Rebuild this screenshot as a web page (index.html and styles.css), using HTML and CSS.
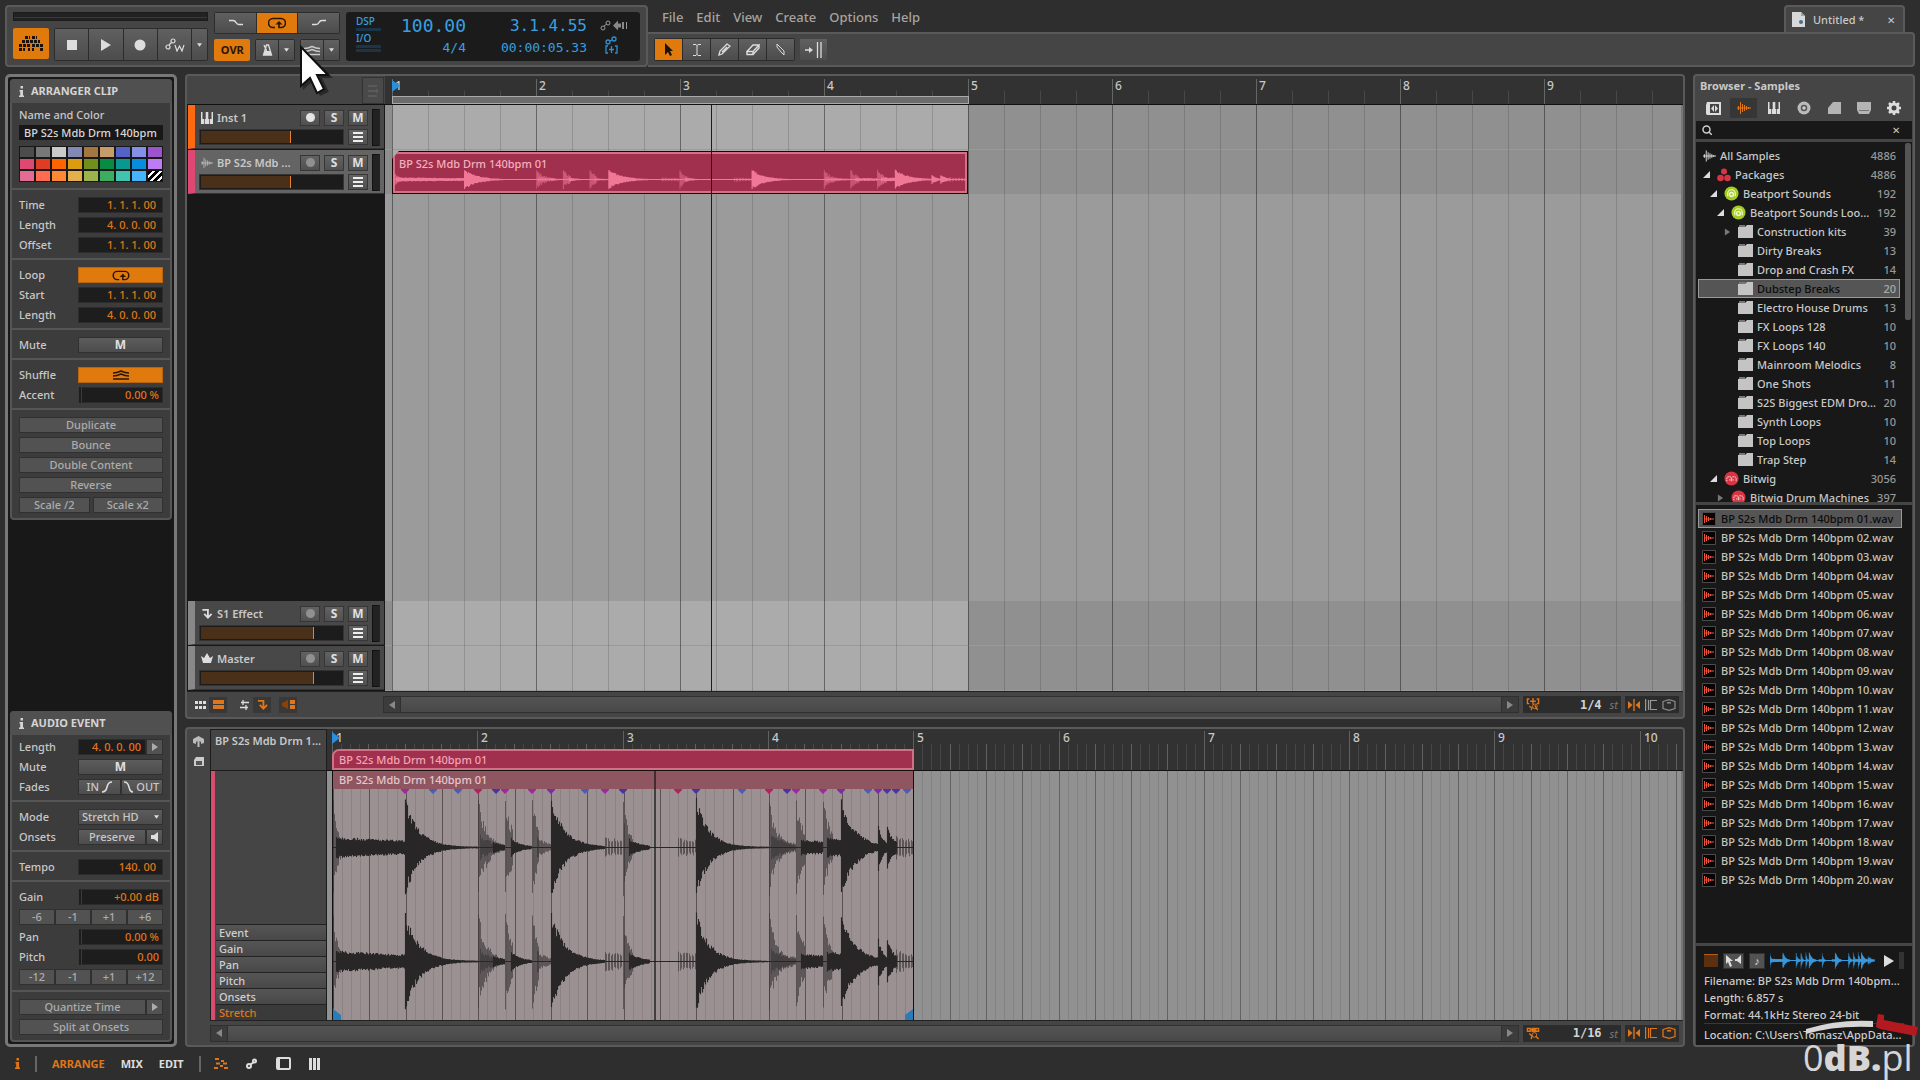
FILE: index.html
```html
<!DOCTYPE html>
<html lang="en">
<head>
<meta charset="utf-8">
<title>Untitled * - Arranger</title>
<link rel="stylesheet" href="styles.css">
</head>
<body>
<svg class="defs" aria-hidden="true">
  <symbol id="i-folder" viewBox="0 0 15 13"><path fill="#777" d="M1 0h6v3H1z"/><path fill="#c4c4c4" d="M0 2h7l2-2h6v13H0z"/></symbol>
  <symbol id="i-open" viewBox="0 0 8 8"><path fill="#ddd" d="M8 0v8H0z"/></symbol>
  <symbol id="i-closed" viewBox="0 0 8 8"><path fill="#777" d="M1 0l6 4-6 4z"/></symbol>
  <symbol id="i-wave" viewBox="0 0 14 12"><path stroke="currentColor" d="M0 6h14M1.500 4v4M3.500 0v12M5.500 2v8M7.500 3v6M9.500 4v4M11.500 5v2"/></symbol>
  <symbol id="i-file" viewBox="0 0 14 14"><path fill="#080404" stroke="#4a4a4a" d="M.5.5h13v13H.5z"/><path stroke="#e8543c" d="M2 7h10M2.500 3v8M4.500 4v6M6.500 5v4M8.500 6v2"/></symbol>
  <symbol id="i-keys" viewBox="0 0 12 12"><path fill="#ddd" d="M0 0h1.500v7H3V12H0zM3.700 7h1V0h2.600v7h1v5H3.700zM10.500 0H12v12H9V7h1.500z"/></symbol>
  <symbol id="i-lines" viewBox="0 0 12 10"><path fill="#eee" d="M1 0h10v2H1zM1 4h10v2H1zM1 8h10v2H1z"/></symbol>
  <symbol id="i-loop" viewBox="0 0 18 12"><path fill="none" stroke="currentColor" stroke-width="1.600" d="M7 10.500H5a4.500 4.500 0 0 1 0-9h8a4.500 4.500 0 0 1 0 9h-2V5"/><path fill="currentColor" d="M7.500 7.500L11 4l3.500 3.500z"/></symbol>
  <symbol id="i-shuffle" viewBox="0 0 16 10"><path fill="none" stroke="currentColor" stroke-width="1.500" d="M0 9h16M0 6q4 0 8-2 4 2 8 2M0 3q4 0 8-2 4 2 8 2"/></symbol>
  <symbol id="i-down" viewBox="0 0 6 4"><path fill="#ddd" d="M0 0h6L3 4z"/></symbol>
  <symbol id="i-right" viewBox="0 0 6 8"><path fill="currentColor" d="M0 0l6 4-6 4z"/></symbol>
  <symbol id="i-left" viewBox="0 0 6 8"><path fill="currentColor" d="M6 0L0 4l6 4z"/></symbol>
  <symbol id="i-bp" viewBox="0 0 16 16"><circle cx="8" cy="8" r="7.500" fill="#a4cc1c"/><path fill="none" stroke="#f0f8d0" stroke-width="1.300" d="M4 11V8a4 4 0 0 1 8 0v3"/><circle cx="8" cy="9" r="2" fill="none" stroke="#f0f8d0" stroke-width="1.500"/></symbol>
  <symbol id="i-bw" viewBox="0 0 16 16"><circle cx="8" cy="8" r="7.500" fill="#d83444"/><path fill="none" stroke="#f4b8bc" stroke-width="1.300" stroke-dasharray="1.500 .6" d="M3 11V8.500a2.500 2.500 0 0 1 5 0V11m0-2.500a2.500 2.500 0 0 1 5 0V11M5.500 9.500h5"/></symbol>
  <symbol id="i-info" viewBox="0 0 5 11"><path fill="currentColor" d="M1.500 0h2.500v2.500H1.500zM.5 4H4v5.500h1V11H0V9.500h1.200v-4H.5z"/></symbol>
  <symbol id="i-snap" viewBox="0 0 14 14"><path fill="none" stroke="currentColor" stroke-width="1.500" d="M3 1H1v5h2M11 1h2v5h-2M7 0v7M4 3.500h6M3 9l3 1.500L5 13M9 8l3 5"/><circle cx="9" cy="9" r="2.500" fill="none" stroke="currentColor"/></symbol>
  <symbol id="i-snap2" viewBox="0 0 14 14"><path fill="none" stroke="currentColor" stroke-width="1.500" d="M1 1.500h3v3H1zM6 1.500h3v3H6zM10 1.500h3v3h-3zM4 3h6M3 7l3 3-1 3M10 10l3 3"/><circle cx="8.500" cy="8.500" r="2.500" fill="none" stroke="currentColor"/></symbol>
  <symbol id="i-mid" viewBox="0 0 12 12"><path fill="currentColor" d="M5.300 0h1.400v12H5.300zM0 2l4.500 4L0 10zM12 2L7.500 6l4.500 4z"/></symbol>
  <symbol id="i-grid" viewBox="0 0 12 12"><path fill="none" stroke="currentColor" stroke-width="1.200" d="M.6 0v12M3.500 1v10M12 1.500H5.500v9H12"/></symbol>
  <symbol id="i-hex" viewBox="0 0 14 12"><path fill="none" stroke="currentColor" stroke-width="1.300" d="M1 2.500L7 .7l6 1.800v7l-6 1.800-6-1.800zM5 4l2-.5 2 .5"/></symbol>
  <symbol id="i-send" viewBox="0 0 12 12"><path fill="none" stroke="currentColor" stroke-width="2" d="M1 2h6v7M3 6.500l4 4 4-4"/></symbol>
</svg>

<header class="top">
  <section class="transport panel">
    <div class="left-controls">
      <div class="meter"></div>
      <div class="btns">
        <button class="btn on logo" aria-label="Application menu"><svg width="26" height="15"><path fill="#1c1208" d="M7 0h3v3H7zm4 0h1v3h-1zM14 0h3v3h-3zm4 0h1v3h-1zM4 4h3v3H4zm4 0h3v3H8zm4 0h3v3h-3zm4 0h3v3h-3zm4 0h2v3h-2zM1 8h3v3H1zm4 0h3v3H5zm4 0h3v3H9zm5 0h3v3h-3zm4 0h3v3h-3zm4 0h3v3h-3zM1 12h3v3H1zm4 0h2v3H5zm17 0h3v3h-3zM10 12h2v3h-2zm4 0h2v3h-2z"/></svg></button>
        <div class="group">
          <button class="btn wide" aria-label="Stop"><svg width="10" height="10"><path fill="#ddd" d="M0 0h10v10H0z"/></svg></button>
          <button class="btn wide" aria-label="Play"><svg width="10" height="12"><path fill="#ddd" d="M0 0l10 6-10 6z"/></svg></button>
          <button class="btn wide" aria-label="Record"><svg width="12" height="12"><circle cx="6" cy="6" r="5.500" fill="#ddd"/></svg></button>
          <button class="btn wide" aria-label="Automation write"><svg width="20" height="14"><g fill="none" stroke="#ddd" stroke-width="1.200"><circle cx="3" cy="9" r="2"/><circle cx="8" cy="3" r="2"/><path d="M4 7l3-3M10 7l2 6 2.500-5 2.500 5 2-6"/></g></svg></button>
          <button class="btn slim" aria-label="Automation options"><svg width="5" height="4"><use href="#i-down"/></svg></button>
        </div>
      </div>
    </div>
    <div class="mid-controls">
      <div class="group">
        <button class="btn third" aria-label="Punch in"><svg width="16" height="8"><path fill="none" stroke="#ddd" stroke-width="1.500" d="M1 1.500h4q2 0 3 2t3 2h4"/></svg></button>
        <button class="btn third on" aria-label="Loop"><svg width="18" height="12"><use href="#i-loop"/></svg></button>
        <button class="btn third" aria-label="Punch out"><svg width="16" height="8"><path fill="none" stroke="#ddd" stroke-width="1.500" d="M1 5.500h4q2 0 3-2t3-2h4"/></svg></button>
      </div>
      <div class="btns lower">
        <button class="btn on ovr">OVR</button>
        <div class="group">
          <button class="btn metro" aria-label="Metronome"><svg width="11" height="12"><path fill="none" stroke="#ddd" stroke-width="1.300" d="M4.500 1h2l3 10h-8zM6 10L2 1"/><path fill="#ddd" d="M2.500 7h6l1 4h-8z"/></svg></button>
          <button class="btn slim" aria-label="Metronome options"><svg width="5" height="4"><use href="#i-down"/></svg></button>
        </div>
        <div class="group">
          <button class="btn metro" aria-label="Groove"><svg width="16" height="11"><use href="#i-shuffle"/></svg></button>
          <button class="btn slim" aria-label="Groove options"><svg width="5" height="4"><use href="#i-down"/></svg></button>
        </div>
      </div>
    </div>
    <div class="display">
      <div class="load"><span>DSP</span><i></i><span>I/O</span><i></i><i></i></div>
      <div class="tempo"><b>100.00</b><span>4/4</span></div>
      <div class="position"><b>3.1.4.55</b><span>00:00:05.33</span></div>
      <svg width="32" height="46" fill="none"><g stroke="#999"><circle cx="3" cy="13" r="2"/><circle cx="8" cy="8" r="2"/><path d="M4 11l3-2M26.500 7v7"/></g><path fill="#888" d="M13 10.500l5-5v3h3v4h-3v3zM22 7h2v7h-2z"/><g stroke="#2f90d0" stroke-width="1.300"><circle cx="8" cy="27" r="2"/><circle cx="14" cy="24" r="2"/><path d="M10 26l2-1M8 31H6v7h2M15 31h2v7h-2M9 34.500h5M11.500 31v7"/></g></svg>
    </div>
  </section>
  <div class="top-right">
    <div class="menu-row">
      <nav><a href="#">File</a><a href="#">Edit</a><a href="#">View</a><a href="#">Create</a><a href="#">Options</a><a href="#">Help</a></nav>
      <div class="tab"><svg width="14" height="15"><path fill="#d8d8d8" d="M0 0h9l4 4v11H0z"/><path fill="#8aa" d="M9 0v4h4z"/><circle cx="9" cy="10" r="2" fill="#456f90"/></svg><span>Untitled *</span><button aria-label="Close tab">✕</button></div>
    </div>
    <div class="toolbar">
      <div class="group">
        <button class="btn tool on" aria-label="Pointer"><svg width="10" height="14"><path fill="#1c1208" d="M1 0l8 8H6l2 4-2 1-2-4-3 3z"/></svg></button>
        <button class="btn tool" aria-label="Time select"><svg width="10" height="14"><path fill="none" stroke="#ddd" d="M1 1.500h3l1 1 1-1h3M5 2v10M1 12.500h3l1-1 1 1h3"/></svg></button>
        <button class="btn tool" aria-label="Pen"><svg width="13" height="13"><path fill="none" stroke="#ddd" stroke-width="1.300" d="M1 12l1-4 7-7 3 2-8 8zM4 9l5-5"/></svg></button>
        <button class="btn tool" aria-label="Eraser"><svg width="14" height="12"><path fill="none" stroke="#ddd" stroke-width="1.400" d="M1 7.500L7 1h6L7 7.500zv3h6v-3M7 10.500L13 4V1"/></svg></button>
        <button class="btn tool" aria-label="Knife"><svg width="11" height="13"><path fill="#555" stroke="#ddd" d="M2 1l7 7v4L6 9 2 4z"/></svg></button>
      </div>
      <button class="btn tool" aria-label="Follow playhead"><svg width="17" height="16"><path stroke="#ddd" stroke-width="1.300" d="M0 8h6M12.500 0v16M16 0v16"/><path fill="#ddd" d="M4 5l4 3-4 3z"/></svg></button>
    </div>
  </div>
</header>

<main>
  <aside class="inspector">
    <section class="card">
      <h2><svg width="5" height="11"><use href="#i-info"/></svg>ARRANGER CLIP</h2>
      <div class="sec first">
        <label class="row" for="clip-name">Name and Color</label>
        <input id="clip-name" class="name" value="BP S2s Mdb Drm 140bpm">
        <div class="palette">
          <button class="c1"></button><button class="c2"></button><button class="c3"></button><button class="c4"></button><button class="c5"></button><button class="c6"></button><button class="c7"></button><button class="c8"></button><button class="c9"></button>
          <button class="c10"></button><button class="c11"></button><button class="c12"></button><button class="c13"></button><button class="c14"></button><button class="c15"></button><button class="c16"></button><button class="c17"></button><button class="c18"></button>
          <button class="c19"></button><button class="c20"></button><button class="c21"></button><button class="c22"></button><button class="c23"></button><button class="c24"></button><button class="c25"></button><button class="c26"></button><button class="c27"></button>
        </div>
      </div>
      <div class="sec">
        <div class="row"><label for="f1">Time</label><input id="f1" value="1. 1. 1. 00"></div>
        <div class="row"><label for="f2">Length</label><input id="f2" value="4. 0. 0. 00"></div>
        <div class="row"><label for="f3">Offset</label><input id="f3" value="1. 1. 1. 00"></div>
      </div>
      <div class="sec">
        <div class="row"><span>Loop</span><button class="flat on" aria-label="Loop"><svg width="18" height="11"><use href="#i-loop"/></svg></button></div>
        <div class="row"><label for="f4">Start</label><input id="f4" value="1. 1. 1. 00"></div>
        <div class="row"><label for="f5">Length</label><input id="f5" value="4. 0. 0. 00"></div>
      </div>
      <div class="sec">
        <div class="row"><span>Mute</span><button class="flat strong">M</button></div>
      </div>
      <div class="sec">
        <div class="row"><span>Shuffle</span><button class="flat on" aria-label="Shuffle"><svg width="16" height="10"><use href="#i-shuffle"/></svg></button></div>
        <div class="row"><label for="f6">Accent</label><input id="f6" class="knob" value="0.00 %"></div>
      </div>
      <div class="sec">
        <div class="row"><button class="act">Duplicate</button></div>
        <div class="row"><button class="act">Bounce</button></div>
        <div class="row"><button class="act">Double Content</button></div>
        <div class="row"><button class="act">Reverse</button></div>
        <div class="row pair"><button class="act">Scale /2</button><button class="act">Scale x2</button></div>
      </div>
    </section>
    <section class="card">
      <h2><svg width="5" height="11"><use href="#i-info"/></svg>AUDIO EVENT</h2>
      <div class="sec first">
        <div class="row"><label for="g1">Length</label><span class="combo"><input id="g1" value="4. 0. 0. 00"><button class="act mini" aria-label="More"><svg width="6" height="8"><use href="#i-right"/></svg></button></span></div>
        <div class="row"><span>Mute</span><button class="flat strong">M</button></div>
        <div class="row"><span>Fades</span><span class="combo"><button class="flat">IN <svg width="10" height="12"><path fill="none" stroke="#ddd" stroke-width="1.500" d="M0 11q4 0 5-5t5-5"/></svg></button><button class="flat"><svg width="9" height="12"><path fill="none" stroke="#ddd" stroke-width="1.500" d="M0 1q4 0 5 5t4 5"/></svg>OUT</button></span></div>
      </div>
      <div class="sec">
        <div class="row"><label for="mode">Mode</label><span class="pick"><select id="mode"><option>Stretch HD</option></select><svg width="5" height="4"><use href="#i-down"/></svg></span></div>
        <div class="row"><span>Onsets</span><span class="combo"><button class="flat">Preserve</button><button class="flat mini" aria-label="Audition"><svg width="8" height="10"><path fill="#ddd" d="M0 3h3l4-3v10L3 7H0z"/></svg></button></span></div>
      </div>
      <div class="sec">
        <div class="row"><label for="g2">Tempo</label><input id="g2" value="140. 00"></div>
      </div>
      <div class="sec">
        <div class="row"><label for="g3">Gain</label><input id="g3" class="knob" value="+0.00 dB"></div>
        <div class="row quad"><button class="act">-6</button><button class="act">-1</button><button class="act">+1</button><button class="act">+6</button></div>
        <div class="row"><label for="g4">Pan</label><input id="g4" class="knob" value="0.00 %"></div>
        <div class="row"><label for="g5">Pitch</label><input id="g5" class="knob" value="0.00"></div>
        <div class="row quad"><button class="act">-12</button><button class="act">-1</button><button class="act">+1</button><button class="act">+12</button></div>
      </div>
      <div class="sec">
        <div class="row quad"><button class="act">Quantize Time</button><button class="act mini" aria-label="Quantize options"><svg width="6" height="8"><use href="#i-right"/></svg></button></div>
        <div class="row"><button class="act">Split at Onsets</button></div>
      </div>
    </section>
  </aside>

  <div class="workspace">
    <section class="panel arranger">
      <div class="ruler-row">
        <div class="head-space"><button class="btn view" aria-label="View"><svg width="12" height="14"><path fill="#5a5a5a" d="M1 1h9v2H1zM1 6h9v2H1zM1 11h9v2H1zM9 4l3 3-3 3z"/></svg></button></div>
        <div class="ruler"><svg id="arr-ruler"></svg></div>
      </div>
      <div class="arr-body">
        <div class="tracks">
          <div class="track inst"><div class="t-main">
            <div class="t-row"><svg width="12" height="12"><use href="#i-keys"/></svg><span class="t-name">Inst 1</span><button class="sq" aria-label="Arm"><i class="dot lit"></i></button><button class="sq">S</button><button class="sq">M</button></div>
            <div class="t-row"><div class="vol"><i class="v60"></i></div><button class="sq" aria-label="Menu"><svg width="12" height="10"><use href="#i-lines"/></svg></button></div></div><div class="vu"></div></div>
          <div class="track audio sel"><div class="t-main">
            <div class="t-row"><svg width="12" height="12" color="#bbb"><use href="#i-wave"/></svg><span class="t-name">BP S2s Mdb ...</span><button class="sq" aria-label="Arm"><i class="dot"></i></button><button class="sq">S</button><button class="sq">M</button></div>
            <div class="t-row"><div class="vol"><i class="v60"></i></div><button class="sq" aria-label="Menu"><svg width="12" height="10"><use href="#i-lines"/></svg></button></div></div><div class="vu"></div></div>
          <div class="fill"></div>
          <div class="track fx"><div class="t-main">
            <div class="t-row"><svg width="12" height="11" color="#ddd"><use href="#i-send"/></svg><span class="t-name">S1 Effect</span><button class="sq" aria-label="Arm"><i class="dot"></i></button><button class="sq">S</button><button class="sq">M</button></div>
            <div class="t-row"><div class="vol"><i class="v77"></i></div><button class="sq" aria-label="Menu"><svg width="12" height="10"><use href="#i-lines"/></svg></button></div></div><div class="vu"></div></div>
          <div class="track fx"><div class="t-main">
            <div class="t-row"><svg width="12" height="11"><path fill="#ddd" d="M0 3l3 2 3-5 3 5 3-2-2 7H2z"/></svg><span class="t-name">Master</span><button class="sq" aria-label="Arm"><i class="dot"></i></button><button class="sq">S</button><button class="sq">M</button></div>
            <div class="t-row"><div class="vol"><i class="v77"></i></div><button class="sq" aria-label="Menu"><svg width="12" height="10"><use href="#i-lines"/></svg></button></div></div><div class="vu"></div></div>
        </div>
        <div class="lanes">
          <svg id="arr-grid" class="over"></svg>
          <div class="lane"></div>
          <div class="lane"><div class="clip"><span>BP S2s Mdb Drm 140bpm 01</span><svg id="clip-wave" class="over"></svg></div></div>
          <div class="fill"></div>
          <div class="lane"></div>
          <div class="lane"></div>
          <div class="playhead arr-play"></div>
        </div>
      </div>
      <div class="strip">
        <div class="toggles">
          <button aria-label="Clip launcher"><svg width="11" height="8"><path fill="#ddd" d="M0 0h3v3H0zM4 0h3v3H4zM8 0h3v3H8zM0 5h3v3H0zM4 5h3v3H4zM8 5h3v3H8z"/></svg></button>
          <button class="active" aria-label="Timeline"><svg width="11" height="9"><path fill="#e0761a" d="M0 0h11v4H0zM0 5h11v4H0z"/></svg></button>
          <button class="gap" aria-label="IO"><svg width="9" height="10"><path stroke="#ddd" stroke-width="1.300" d="M1 2.500h8M0 7.500h8M3 0v5M6 5v5"/></svg></button>
          <button class="active" aria-label="Effect tracks"><svg width="11" height="11" color="#e0761a"><use href="#i-send"/></svg></button>
          <button class="active gap" aria-label="Crossfade"><svg width="13" height="9"><path fill="#8a4208" d="M6 0v9L0 6V3z"/><path fill="#e0761a" d="M8 0h5v4H8zM8 5h5v4H8z"/></svg></button>
        </div>
        <div class="scroll"><button aria-label="Scroll left"><svg width="6" height="8"><use href="#i-left"/></svg></button><div class="thumb"></div><button aria-label="Scroll right"><svg width="6" height="8"><use href="#i-right"/></svg></button></div>
        <div class="snap"><svg width="14" height="13" color="#e0761a"><use href="#i-snap"/></svg><b>1/4</b><i>st</i></div>
        <div class="modes"><svg width="12" height="12" color="#e0761a"><use href="#i-mid"/></svg><svg width="12" height="12" color="#999"><use href="#i-grid"/></svg><svg width="14" height="12" color="#888"><use href="#i-hex"/></svg></div>
      </div>
    </section>

    <section class="panel editor">
      <div class="ed-icons"><svg width="11" height="11"><path fill="#bbb" d="M0 3l5.500-3L11 3v4l-3 1V6L6.500 5v6h-2V5L3 6v2L0 7z"/></svg><svg width="11" height="11"><path fill="#ccc" d="M3 1h8v9H1V4z"/><path fill="#555" d="M3 5h6v4H3z"/></svg></div>
      <div class="ed-main">
        <div class="ed-grid">
          <div class="ed-name">BP S2s Mdb Drm 1...</div>
          <div class="ed-ruler"><svg id="ed-ruler" class="over"></svg><div class="ed-clip">BP S2s Mdb Drm 140bpm 01</div></div>
          <div class="ed-side"><button>Event</button><button>Gain</button><button>Pan</button><button>Pitch</button><button>Onsets</button><button class="cur">Stretch</button></div>
          <div class="ed-canvas">
            <svg id="ed-back" class="over"></svg>
            <div class="event"><div class="event-head">BP S2s Mdb Drm 140bpm 01</div><svg id="ed-wave"></svg></div>
            <div class="playhead ed-play"></div>
          </div>
        </div>
        <div class="strip ed-strip">
          <div class="scroll"><button aria-label="Scroll left"><svg width="6" height="8"><use href="#i-left"/></svg></button><div class="thumb"></div><button aria-label="Scroll right"><svg width="6" height="8"><use href="#i-right"/></svg></button></div>
          <div class="snap"><svg width="14" height="13" color="#e0761a"><use href="#i-snap2"/></svg><b>1/16</b><i>st</i></div>
          <div class="modes"><svg width="12" height="12" color="#e0761a"><use href="#i-mid"/></svg><svg width="12" height="12" color="#e0761a"><use href="#i-grid"/></svg><svg width="14" height="12" color="#e0761a"><use href="#i-hex"/></svg></div>
        </div>
      </div>
    </section>
  </div>

  <aside class="panel browser">
    <h2>Browser - Samples</h2>
    <div class="kinds">
      <button aria-label="Devices"><svg width="15" height="13"><path fill="#ddd" d="M1 0h14v13H1a3 3 0 0 1-1-3V3z"/><path fill="#444" d="M4 2h9v9H4z"/><path fill="#ddd" d="M8 3v7L5 6.500zM9 3v7l3-3.500z"/></svg></button>
      <button class="cur" aria-label="Samples"><svg width="14" height="12" color="#e0761a"><use href="#i-wave"/></svg></button>
      <button aria-label="Presets"><svg width="12" height="12"><use href="#i-keys"/></svg></button>
      <button aria-label="Multisamples"><svg width="14" height="14"><circle cx="7" cy="7" r="6.500" fill="#bbb"/><circle cx="7" cy="7" r="2.500" fill="#ccc" stroke="#555" stroke-width="1.500"/></svg></button>
      <button aria-label="Clips"><svg width="13" height="12"><path fill="#b4b4b4" d="M5 0h8v12H0V6z"/></svg></button>
      <button aria-label="Files"><svg width="14" height="12"><path fill="#b4b4b4" d="M0 0h14v8l-2 4H2L0 8z"/><path fill="#777" d="M2 8h10v1H2z"/></svg></button>
      <button aria-label="Settings"><svg width="14" height="14"><circle cx="7" cy="7" r="4" fill="none" stroke="#ddd" stroke-width="3"/><path stroke="#ddd" stroke-width="2.500" d="M7 0v3M7 11v3M0 7h3M11 7h3M2 2l2 2M10 10l2 2M12 2l-2 2M4 10l-2 2"/></svg></button>
    </div>
    <div class="search"><svg width="10" height="10"><circle cx="4.500" cy="4.500" r="3.500" fill="none" stroke="#ccc" stroke-width="1.500"/><path stroke="#ccc" stroke-width="1.500" d="M7 7l3 3"/></svg><input aria-label="Search"><button aria-label="Clear">✕</button></div>
    <div class="tree">
      <ul>
        <li class="d0"><svg width="13" height="12" color="#ddd"><use href="#i-wave"/></svg><span class="t">All Samples</span><span class="n">4886</span></li>
        <li class="d0"><svg class="tri" width="7" height="7"><use href="#i-open"/></svg><svg width="14" height="14"><g fill="#d83444"><circle cx="7" cy="3.500" r="3"/><circle cx="3.500" cy="10" r="3.300"/><circle cx="10.500" cy="10" r="3.300"/></g></svg><span class="t">Packages</span><span class="n">4886</span></li>
        <li class="d1"><svg class="tri" width="7" height="7"><use href="#i-open"/></svg><svg width="15" height="15"><use href="#i-bp"/></svg><span class="t">Beatport Sounds</span><span class="n">192</span></li>
        <li class="d2"><svg class="tri" width="7" height="7"><use href="#i-open"/></svg><svg width="15" height="15"><use href="#i-bp"/></svg><span class="t">Beatport Sounds Loo...</span><span class="n">192</span></li>
        <li class="d3"><svg class="tri" width="7" height="8"><use href="#i-closed"/></svg><svg width="15" height="13"><use href="#i-folder"/></svg><span class="t">Construction kits</span><span class="n">39</span></li>
        <li class="d4"><svg width="15" height="13"><use href="#i-folder"/></svg><span class="t">Dirty Breaks</span><span class="n">13</span></li>
        <li class="d4"><svg width="15" height="13"><use href="#i-folder"/></svg><span class="t">Drop and Crash FX</span><span class="n">14</span></li>
        <li class="d4 sel"><svg width="15" height="13"><use href="#i-folder"/></svg><span class="t">Dubstep Breaks</span><span class="n">20</span></li>
        <li class="d4"><svg width="15" height="13"><use href="#i-folder"/></svg><span class="t">Electro House Drums</span><span class="n">13</span></li>
        <li class="d4"><svg width="15" height="13"><use href="#i-folder"/></svg><span class="t">FX Loops 128</span><span class="n">10</span></li>
        <li class="d4"><svg width="15" height="13"><use href="#i-folder"/></svg><span class="t">FX Loops 140</span><span class="n">10</span></li>
        <li class="d4"><svg width="15" height="13"><use href="#i-folder"/></svg><span class="t">Mainroom Melodics</span><span class="n">8</span></li>
        <li class="d4"><svg width="15" height="13"><use href="#i-folder"/></svg><span class="t">One Shots</span><span class="n">11</span></li>
        <li class="d4"><svg width="15" height="13"><use href="#i-folder"/></svg><span class="t">S2S Biggest EDM Dro...</span><span class="n">20</span></li>
        <li class="d4"><svg width="15" height="13"><use href="#i-folder"/></svg><span class="t">Synth Loops</span><span class="n">10</span></li>
        <li class="d4"><svg width="15" height="13"><use href="#i-folder"/></svg><span class="t">Top Loops</span><span class="n">10</span></li>
        <li class="d4"><svg width="15" height="13"><use href="#i-folder"/></svg><span class="t">Trap Step</span><span class="n">14</span></li>
        <li class="d1"><svg class="tri" width="7" height="7"><use href="#i-open"/></svg><svg width="15" height="15"><use href="#i-bw"/></svg><span class="t">Bitwig</span><span class="n">3056</span></li>
        <li class="d2"><svg class="tri" width="7" height="8"><use href="#i-closed"/></svg><svg width="15" height="15"><use href="#i-bw"/></svg><span class="t">Bitwig Drum Machines</span><span class="n">397</span></li>
      </ul>
      <div class="bar"></div>
    </div>
    <ul class="files">
      <li class="sel"><svg width="14" height="14"><use href="#i-file"/></svg>BP S2s Mdb Drm 140bpm 01.wav</li>
      <li><svg width="14" height="14"><use href="#i-file"/></svg>BP S2s Mdb Drm 140bpm 02.wav</li>
      <li><svg width="14" height="14"><use href="#i-file"/></svg>BP S2s Mdb Drm 140bpm 03.wav</li>
      <li><svg width="14" height="14"><use href="#i-file"/></svg>BP S2s Mdb Drm 140bpm 04.wav</li>
      <li><svg width="14" height="14"><use href="#i-file"/></svg>BP S2s Mdb Drm 140bpm 05.wav</li>
      <li><svg width="14" height="14"><use href="#i-file"/></svg>BP S2s Mdb Drm 140bpm 06.wav</li>
      <li><svg width="14" height="14"><use href="#i-file"/></svg>BP S2s Mdb Drm 140bpm 07.wav</li>
      <li><svg width="14" height="14"><use href="#i-file"/></svg>BP S2s Mdb Drm 140bpm 08.wav</li>
      <li><svg width="14" height="14"><use href="#i-file"/></svg>BP S2s Mdb Drm 140bpm 09.wav</li>
      <li><svg width="14" height="14"><use href="#i-file"/></svg>BP S2s Mdb Drm 140bpm 10.wav</li>
      <li><svg width="14" height="14"><use href="#i-file"/></svg>BP S2s Mdb Drm 140bpm 11.wav</li>
      <li><svg width="14" height="14"><use href="#i-file"/></svg>BP S2s Mdb Drm 140bpm 12.wav</li>
      <li><svg width="14" height="14"><use href="#i-file"/></svg>BP S2s Mdb Drm 140bpm 13.wav</li>
      <li><svg width="14" height="14"><use href="#i-file"/></svg>BP S2s Mdb Drm 140bpm 14.wav</li>
      <li><svg width="14" height="14"><use href="#i-file"/></svg>BP S2s Mdb Drm 140bpm 15.wav</li>
      <li><svg width="14" height="14"><use href="#i-file"/></svg>BP S2s Mdb Drm 140bpm 16.wav</li>
      <li><svg width="14" height="14"><use href="#i-file"/></svg>BP S2s Mdb Drm 140bpm 17.wav</li>
      <li><svg width="14" height="14"><use href="#i-file"/></svg>BP S2s Mdb Drm 140bpm 18.wav</li>
      <li><svg width="14" height="14"><use href="#i-file"/></svg>BP S2s Mdb Drm 140bpm 19.wav</li>
      <li><svg width="14" height="14"><use href="#i-file"/></svg>BP S2s Mdb Drm 140bpm 20.wav</li>
    </ul>
    <div class="preview">
      <div class="player">
        <svg width="14" height="13"><path fill="#5a3010" d="M0 0h14v13H0z"/><path fill="#b0601c" d="M0 0h14v1H0z"/></svg>
        <button class="act" aria-label="Audition"><svg width="15" height="12"><path fill="#ddd" d="M0 0l7 6H4l2 5-2 1-2-5-2 2zM9 4h2l4-4v9l-4-3H9z"/></svg></button>
        <button class="act" aria-label="Sync">♪</button>
        <svg id="pv-wave"></svg>
        <button class="plain" aria-label="Play"><svg width="10" height="12"><path fill="#ddd" d="M0 0l10 6-10 6z"/></svg></button>
        <div class="pv-vu"></div>
      </div>
      <p>Filename: BP S2s Mdb Drm 140bpm...</p>
      <p>Length: 6.857 s</p>
      <p>Format: 44.1kHz Stereo 24-bit</p>
      <p class="loc">Location: C:\Users\Tomasz\AppData...</p>
    </div>
  </aside>
</main>

<footer>
  <button class="cur" aria-label="Inspector"><svg width="5" height="11"><use href="#i-info"/></svg></button>
  <nav><a href="#" class="cur">ARRANGE</a><a href="#">MIX</a><a href="#">EDIT</a></nav>
  <div class="views">
    <button aria-label="Detail editor"><svg width="14" height="11"><path stroke="#e0761a" stroke-width="2" d="M1 1h4M7 3h3M2 5.500h4M9 5.500h4M0 10h4M6 8h3M10 10h4"/></svg></button>
    <button aria-label="Automation"><svg width="12" height="11"><g fill="none" stroke="#ddd" stroke-width="2"><circle cx="3" cy="8" r="2"/><circle cx="8.500" cy="3" r="1.500"/><path d="M4.500 6.500L8 4"/></g></svg></button>
    <button aria-label="Device"><svg width="15" height="13"><rect x="1" y="1" width="13" height="11" rx="1" fill="none" stroke="#ddd" stroke-width="2"/><path fill="#ddd" d="M1 1h3v11H1z"/></svg></button>
    <button aria-label="Mixer"><svg width="11" height="12"><path fill="#ddd" d="M0 0h3v12H0zM4 0h3v12H4zM8 0h3v12H8z"/></svg></button>
  </div>
</footer>

<div class="watermark">
  <svg width="120" height="26"><path fill="#d6d6d6" d="M6 15Q38 5 73 7v6Q36 11 6 20z"/><path fill="#b31a20" d="M78 0l6 1v5l34 7-2 9-36-7-4-2z"/></svg>
  <p><span class="thin">0</span><b>dB.</b><span class="thin">pl</span></p>
</div>
<svg class="cursor" width="34" height="52"><path fill="#000" opacity=".4" d="M3 3v42l10-9 7 15 9-4-7-14h11z"/><path fill="#fff" stroke="#111" stroke-width="2" d="M1 2v39l9-8 7 15 7-4-7-14h11z"/></svg>
<script src="script.js"></script>
</body>
</html>
```
FILE: styles.css
```css
* { box-sizing: border-box; }
body {
  margin: 0; padding: 5px 5px 0; min-height: 100vh; display: flex; flex-direction: column;
  background: #2e2e2e; color: #c8c8c8; font: 500 11px/16px "Noto Sans", "Open Sans", sans-serif; overflow: hidden; position: relative;
}
.defs { position: absolute; width: 0; height: 0; }
button, input, select { font: inherit; color: inherit; margin: 0; padding: 0; border: 0; background: none; border-radius: 0; min-width: 0; }
button { display: inline-flex; align-items: center; justify-content: center; }
a { color: inherit; text-decoration: none; }
h2, p, ul { margin: 0; padding: 0; list-style: none; }
svg { display: block; flex: none; }
.panel { background: #454545; border: 2px solid #5a5a5a; border-radius: 4px; }
.group { display: flex; border: 1px solid #2c2c2c; gap: 1px; background: #2c2c2c; border-radius: 2px; }
.btn { background: linear-gradient(#606060, #4c4c4c); }
.on { background: #e07a0c; color: #2a1606; }

/* header */
.top { display: flex; height: 62px; }
.transport { width: 643px; display: flex; padding: 5px 6px 4px; gap: 6px; }
.left-controls { width: 199px; display: flex; flex-direction: column; justify-content: space-between; }
.meter { height: 9px; background: linear-gradient(#222 4px, #3a3a3a 4px 5px, #222 5px); border: 1px solid #1c1c1c; }
.btns { display: flex; gap: 5px; }
.left-controls .btn { height: 31px; }
.logo { width: 36px; border-radius: 2px; }
.wide { flex: 1; }
.left-controls .group { flex: 1; }
.slim { width: 15px; }
.mid-controls { width: 128px; display: flex; flex-direction: column; justify-content: space-between; }
.mid-controls .btn { height: 20px; }
.third { flex: 1; }
.mid-controls .ovr { width: 36px; height: 22px; border-radius: 2px; font-weight: 700; }
.lower .group { flex: 1; }
.metro { flex: 1; }
.display { flex: 1; background: #1b1b1b; border-radius: 3px; color: #38a0e0; display: flex; padding: 3px 8px 0 10px; }
.load { width: 32px; font-size: 10px; line-height: 13px; }
.load span { display: block; }
.load i { display: block; height: 3px; width: 25px; background: #1c3448; margin-bottom: 1px; }
.tempo, .position { display: flex; flex-direction: column; align-items: flex-end; font-family: "DejaVu Sans Mono", monospace; font-size: 13px; line-height: 22px; }
.tempo { width: 78px; }
.position { width: 121px; margin-right: 13px; }
.tempo b, .position b { font-size: 18px; font-weight: 400; }
.position b { font-size: 16px; }
.top-right { flex: 1; display: flex; flex-direction: column; }
.menu-row { height: 27px; display: flex; justify-content: space-between; align-items: stretch; }
.menu-row nav { display: flex; gap: 13px; padding-left: 14px; color: #a8a39e; font-size: 13px; line-height: 25px; }
.tab { width: 121px; margin-right: 10px; background: #454545; border: 2px solid #5a5a5a; border-bottom: 0; border-radius: 4px 4px 0 0; display: flex; align-items: center; padding: 0 8px 0 6px; gap: 7px; }
.tab span { flex: 1; }
.tab button { font-size: 10px; }
.toolbar { height: 35px; background: #454545; border: 2px solid #5a5a5a; border-left: 0; border-radius: 0 4px 4px 0; display: flex; gap: 5px; align-items: center; padding-left: 6px; }
.tool { width: 27px; height: 21px; }

main { flex: 1; margin-top: 7px; display: grid; grid-template-columns: 172px minmax(0, 1fr) 222px; gap: 8px; min-height: 0; }

/* inspector */
.inspector { border: 3px solid #787878; border-radius: 5px; background: #181818; padding: 2px; display: flex; flex-direction: column; justify-content: space-between; }
.card { background: #3c3c3c; border: 2px solid #555; border-top: 0; border-radius: 4px; }
.card h2 { height: 24px; margin: 0 -2px; padding-left: 9px; display: flex; align-items: center; gap: 7px; background: #505050; border-radius: 4px 4px 0 0; font-size: 11px; font-weight: 700; color: #d4d4d4; }
.sec { border-top: 2px solid #555; padding: 5px 7px 3px; }
.sec.first { border: 0; padding-top: 2px; }
.row { height: 20px; display: flex; align-items: center; justify-content: space-between; gap: 4px; }
.row input, .flat, .combo, .pick { width: 85px; height: 16px; }
.row input { background: #1d1d1d; color: #e0761a; text-align: right; padding-right: 6px; border: 1px solid #2c2c2c; }
.row .knob { padding-right: 3px; border-left: 4px double #3a3a3a; }
.name { width: 100%; height: 15px; background: #181818; padding: 0 5px; display: block; color: #d8d8d8; }
.palette { margin: 6px 0 3px; height: 36px; background: #181818; display: grid; grid-template-columns: repeat(9, 1fr); grid-template-rows: repeat(3, 1fr); gap: 2px; padding: 1px; }
.c1{background:#4c4c4c}.c2{background:#787878}.c3{background:#cacaca}.c4{background:#8488b4}.c5{background:#a27840}.c6{background:#c89c68}.c7{background:#5462c8}.c8{background:#8490e8}.c9{background:#9c54cc}
.c10{background:#e04874}.c11{background:#e03c24}.c12{background:#ff6400}.c13{background:#dc9c10}.c14{background:#70901c}.c15{background:#088c44}.c16{background:#089890}.c17{background:#088cdc}.c18{background:#bc7cf4}
.c19{background:#e46c94}.c20{background:#ff6c50}.c21{background:#ff8834}.c22{background:#e4b04c}.c23{background:#9cb44c}.c24{background:#3cac60}.c25{background:#40c4b0}.c26{background:#44b4fc}.c27{background:repeating-linear-gradient(135deg,#000 0 3px,#fff 3px 5px)}
.flat { background: linear-gradient(#5c5c5c, #4c4c4c); border: 1px solid #303030; gap: 3px; }
.flat.on { background: #e07a0c; border-color: #b86410; }
.flat.strong { font-size: 12px; font-weight: 700; color: #e0e0e0; }
.combo { display: flex; }
.combo input, .combo .flat { flex: 1; width: auto; padding-left: 0; padding-right: 4px; }
.combo .flat { padding: 0; }
.combo .mini, .row .mini { flex: none; width: 17px; }
.pick { position: relative; background: linear-gradient(#5c5c5c, #4c4c4c); border: 1px solid #303030; display: flex; align-items: center; padding: 0 3px; }
.pick select { appearance: none; flex: 1; height: 14px; line-height: 14px; }
.act { flex: 1; height: 16px; background: #525252; border: 1px solid #303030; color: #acacac; }
.quad { gap: 0; }
.pair { gap: 3px; }

/* arranger */
.workspace { display: grid; grid-template-rows: minmax(0, 1fr) 320px; gap: 8px; min-width: 0; }
.arranger { display: flex; flex-direction: column; min-width: 0; overflow: hidden; }
.ruler-row { display: flex; height: 29px; border-bottom: 1px solid #111; }
.head-space { width: 198px; display: flex; justify-content: flex-end; padding: 1px 1px 0 0; }
.view { width: 22px; background: #4a4a4a; border: 1px solid #333; }
.ruler { flex: 1; background: #323232; overflow: hidden; min-width: 0; }
.ruler svg, #arr-grid, #ed-back { width: 100%; height: 100%; }
svg text { fill: #c8c8c8; font: 500 12px "Noto Sans", sans-serif; }
.arr-body { flex: 1; display: flex; min-height: 0; }
.tracks { width: 198px; background: #181818; display: flex; flex-direction: column; padding: 0 1px; }
.fill { flex: 1; }
.track { height: 44px; margin-bottom: 1px; border-left: 7px solid #888; background: #484848; display: flex; padding: 0 4px; gap: 4px; border-bottom: 1px solid #333; }
.track.inst { border-left-color: #ff6a10; }
.track.audio { border-left-color: #e04874; }
.track.sel { background: #646464; }
.t-main { flex: 1; display: flex; flex-direction: column; padding-top: 4px; gap: 2px; }
.t-row { display: flex; height: 17px; align-items: center; gap: 4px; }
.t-name { flex: 1; font-weight: 600; white-space: nowrap; margin-right: -4px; }
.t-row > svg { margin-left: 2px; }
.sq { width: 20px; height: 16px; background: linear-gradient(#626262, #505050); border: 1px solid #363636; font-size: 12px; font-weight: 700; color: #e0e0e0; }
.dot { width: 9px; height: 9px; border-radius: 50%; background: #909090; }
.dot.lit { background: #e4e4e4; }
.vol { flex: 1; height: 16px; background: #1c1c1c; border: 1px solid #333; padding: 1px; }
.vol i { display: block; height: 100%; background: #4a3018; border-right: 1px solid #e88030; }
.v60 { width: 64%; }
.v77 { width: 80%; }
.vu { width: 8px; margin: 4px 0 2px; background: #222; border: 1px solid #111; border-right: 3px double #222; }
.lanes { flex: 1; min-width: 0; position: relative; background: #9b9b9b; display: flex; flex-direction: column; border-right: 2px solid #777; }
.over { position: absolute; inset: 0; pointer-events: none; }
.lane { height: 45px; border-bottom: 1px solid #9a9a9a; padding: 1px 0 0 7px; background: linear-gradient(90deg, #8e8e8e 7px, #ababab 7px 583px, #909090 583px); }
.clip { position: relative; width: 576px; height: 43px; background: #a0304e; border: 1px solid #1c0408; box-shadow: inset 0 0 0 2px #d47084; padding: 4px 6px; color: #f4b0bc; clip-path: polygon(7px 0, 100% 0, 100% 100%, 0 100%, 0 8px); }
#clip-wave { width: 100%; height: 100%; }
.playhead { position: absolute; top: 0; bottom: 0; width: 1px; background: #1c1c1c; }
.arr-play { left: 326px; }
.ed-play { left: 327px; width: 2px; opacity: .7; }
.strip { height: 26px; display: flex; align-items: center; gap: 4px; border-top: 1px solid #222; padding-right: 4px; }
.ed-strip { height: 25px; }
.toggles { width: 192px; display: flex; align-items: center; padding-left: 4px; }
.toggles button { width: 18px; height: 16px; }
.toggles .active { background: #383838; }
.toggles .gap { margin-left: 8px; }
.scroll { flex: 1; height: 17px; display: flex; border: 1px solid #303030; background: #3c3c3c; color: #888; }
.scroll button { width: 16px; }
.thumb { flex: 1; background: linear-gradient(#545454, #484848); border: solid #303030; border-width: 0 1px; }
.snap { width: 98px; height: 17px; background: #2c2c2c; display: flex; align-items: center; padding: 0 3px; gap: 8px; }
.snap b { flex: 1; text-align: right; font: 700 12px "DejaVu Sans Mono", monospace; color: #d4d4d4; }
.snap i { font: italic 11px "Noto Sans", sans-serif; color: #777; }
.modes { width: 54px; height: 17px; background: #2c2c2c; display: flex; align-items: center; justify-content: space-around; }

/* detail editor */
.editor { display: flex; overflow: hidden; }
.ed-icons { width: 23px; padding: 7px 0 0 6px; display: flex; flex-direction: column; gap: 9px; }
.ed-main { flex: 1; min-width: 0; display: flex; flex-direction: column; }
.ed-grid { flex: 1; display: grid; grid-template-columns: 116px minmax(0, 1fr); grid-template-rows: 42px minmax(0, 1fr); border-left: 1px solid #1c1c1c; }
.ed-name { padding: 2px 4px; border: solid #1c1c1c; border-width: 1px 1px 1px 0; font-weight: 600; white-space: nowrap; line-height: 18px; }
.ed-ruler { position: relative; background: #323232; border-bottom: 1px solid #111; padding: 20px 0 0 5px; overflow: hidden; }
#ed-ruler { width: 100%; height: 41px; }
.ed-clip { position: relative; width: 582px; height: 21px; background: #a0304e; border: 2px solid #d47084; border-radius: 7px 0 0 0; color: #f4a4b4; padding-left: 5px; line-height: 18px; }
.ed-side { border-left: 4px solid #d84c70; border-right: 1px solid #1c1c1c; display: flex; flex-direction: column; justify-content: flex-end; padding-left: 1px; }
.ed-side button { height: 16px; justify-content: flex-start; padding-left: 3px; border-top: 1px solid #222; background: linear-gradient(#555, #484848); color: #d0d0d0; }
.ed-side .cur { background: #3a3a3a; }
.cur, .ed-side .cur { color: #e0761a; }
.ed-canvas { position: relative; background: #919191; padding-left: 5px; border-right: 2px solid #777; display: flex; }
.event { position: relative; width: 582px; display: flex; flex-direction: column; border: solid #111; border-width: 0 1px; background: #9b9193; }
.event-head { height: 18px; background: #8f5661; color: #e4c8cc; padding-left: 6px; line-height: 18px; }
#ed-wave { flex: 1; width: 100%; }

/* browser */
.browser { display: flex; flex-direction: column; min-height: 0; padding: 0 1px; }
.browser h2 { font-size: 11px; font-weight: 700; height: 22px; padding: 2px 4px; }
.kinds { height: 22px; display: flex; justify-content: space-between; padding: 0 4px; }
.kinds button { width: 27px; height: 20px; }
.kinds .cur { background: #363636; }
.search { height: 18px; margin-top: 1px; background: #181818; display: flex; align-items: center; padding: 0 12px 0 6px; gap: 6px; }
.search input { flex: 1; }
.search button { font-size: 10px; }
.tree { height: 360px; margin-top: 3px; background: #181818; display: flex; overflow: hidden; }
.tree ul { flex: 1; padding: 4px 1px 0 2px; min-width: 0; }
.bar { width: 6px; height: 177px; margin: 1px 1px 0 4px; background: #555; border-radius: 2px; }
li { height: 19px; display: flex; align-items: center; white-space: nowrap; border: 1px solid transparent; }
.tree li { gap: 4px; padding-right: 3px; }
.tri { margin-right: 3px; }
.t { flex: 1; }
.n { color: #999; }
.d0 { padding-left: 4px; }
.d1 { padding-left: 11px; }
.d2 { padding-left: 18px; }
.d3 { padding-left: 25px; }
.d4 { padding-left: 39px; }
li.sel { background: #555; border-color: #999; color: #0c0c0c; }
.sel .n { color: #aaa; }
.files { flex: 1; margin-top: 3px; background: #181818; padding: 4px 10px 0 2px; color: #c8c4b8; overflow: hidden; min-height: 0; }
.files li { gap: 5px; padding-left: 3px; }
.preview { height: 99px; margin-top: 3px; background: #181818; padding: 6px 8px 0; color: #ccc; }
.player { display: flex; height: 17px; align-items: center; gap: 5px; margin-bottom: 3px; }
.player .act { flex: none; width: 21px; color: #ddd; }
.player .act + .act { width: 16px; }
#pv-wave { flex: 1; width: auto; min-width: 0; height: 17px; }
.pv-vu { width: 5px; height: 17px; background: #333; }
.preview p { line-height: 17px; white-space: nowrap; }
.preview .loc { border-top: 1px solid #383838; padding-top: 2px; }

footer { height: 33px; display: flex; align-items: center; padding-left: 10px; font-weight: 700; color: #ddd; }
footer nav, .views { display: flex; align-items: center; gap: 16px; border-left: 2px solid #666; height: 16px; margin-left: 15px; padding-left: 15px; }
.views { padding-left: 13px; gap: 18px; }

.watermark { position: absolute; right: 0; bottom: 0; width: 120px; height: 66px; overflow: hidden; color: #d6d6d6; }
.watermark p { font: 36px/40px "Open Sans", sans-serif; margin-top: -2px; padding-left: 3px; white-space: nowrap; }
.watermark b { font-weight: 800; }
.thin { font-weight: 400; }
.cursor { position: absolute; left: 300px; top: 45px; }
```
FILE: script.js
```js
const NS = 'http://www.w3.org/2000/svg';
const $ = id => document.getElementById(id);
function add(parent, tag, attrs, text) {
  const el = document.createElementNS(NS, tag);
  for (const k in attrs) el.setAttribute(k, attrs[k]);
  if (text !== undefined) el.textContent = text;
  parent.appendChild(el);
}
const line = (svg, x, y1, y2, stroke, w = 1) =>
  add(svg, 'line', { x1: Math.round(x) + 0.5, x2: Math.round(x) + 0.5, y1, y2, stroke, 'stroke-width': w });
let seed = 7;
const rnd = () => (seed = (seed * 16807) % 2147483647) / 2147483647;
const barsIn = (svg, bar) => Math.ceil((svg.getBoundingClientRect().width - 24) / bar);

// Timeline rulers and grids
const arrBars = barsIn($('arr-ruler'), 144);
for (let b = 0; b < arrBars; b++) {
  for (let q = 0; q < 4; q++) {
    const x = 7 + b * 144 + q * 36;
    line($('arr-ruler'), x, q ? 15 : 3, 28, q ? '#484848' : '#666');
    line($('arr-grid'), x, 0, '100%', q ? 'rgba(0,0,0,.14)' : 'rgba(0,0,0,.4)');
  }
  add($('arr-ruler'), 'text', { x: 10 + b * 144, y: 14 }, b + 1);
}
add($('arr-ruler'), 'rect', { x: 7.5, y: 20.500, width: 576, height: 7, fill: '#6c6c6c', stroke: '#aaa' });
add($('arr-ruler'), 'path', { d: 'M7 4l8 6-8 6z', fill: '#2a8ed8' });

const BAR = 145.3;
const edBars = barsIn($('ed-ruler'), BAR);
for (let b = 0; b < edBars; b++) {
  for (let s = 0; s < 16; s++) {
    const x = 5 + BAR * (b + s / 16);
    const beat = s % 4 === 0;
    line($('ed-ruler'), x, s ? 15 : 2, 41, beat ? '#606060' : '#474747');
    line($('ed-back'), x, 0, '100%', beat ? 'rgba(0,0,0,.32)' : 'rgba(0,0,0,.1)');
  }
  add($('ed-ruler'), 'text', { x: 9 + Math.round(b * BAR), y: 13 }, b + 1);
}
add($('ed-ruler'), 'path', { d: 'M5 3l8 6-8 6z', fill: '#2a8ed8' });

// Drum hits: start, peak, decay length, end, kind (s = solid, l = light transient, c = comb)
const HITS = [
  [0, 45, 5, 10, 'l'], [3, 10, 150, 72, 's'],
  [72, 46, 14, 145, 's'], [145, 46, 9, 172, 'l'], [147, 12, 14, 172, 'l'], [160, 5, 12, 172, 's'],
  [172, 46, 8, 180, 'l'], [178, 9, 9, 199, 's'], [199, 46, 8, 206, 'l'], [204, 10, 12, 218, 'l'],
  [218, 46, 14, 272, 's'], [272, 9, 99, 290, 'c'], [290, 46, 6, 300, 'l'], [296, 8, 12, 317, 's'],
  [345, 9, 99, 363, 'c'], [363, 47, 13, 436, 's'], [436, 46, 8, 463, 'l'], [438, 12, 22, 463, 'l'],
  [463, 46, 8, 472, 'l'], [468, 7, 99, 490, 's'], [490, 46, 8, 500, 'l'], [494, 9, 99, 508, 's'],
  [508, 46, 14, 545, 's'], [545, 22, 5, 554, 's'], [554, 20, 7, 564, 's'], [563, 11, 40, 580, 'c']
];
function wave(svg, cy, scaleX, scaleY, dark, light) {
  let solid = '', thin = '';
  for (const [start, peak, decay, end, kind] of HITS) {
    for (let x = start; x < end; x += 1) {
      if (kind === 'c' && x % 3 === 1) continue;
      const env = peak * Math.exp(-(x - start) / decay) + 0.6;
      const floor = x === start ? 0.95 : kind === 's' ? 0.76 : 0.6;
      const up = env * (floor + rnd() * (1.05 - floor)) * scaleY;
      const dn = env * (floor + rnd() * (1.05 - floor)) * scaleY;
      const seg = `M${((x + 0.5) * scaleX).toFixed(1)} ${(cy - up).toFixed(1)}V${(cy + dn).toFixed(1)}`;
      if (kind === 's') solid += seg; else thin += seg;
    }
  }
  add(svg, 'path', { d: thin, stroke: light, 'stroke-width': Math.max(scaleX, 0.7), 'stroke-opacity': 0.62 });
  add(svg, 'path', { d: solid, stroke: dark, 'stroke-width': Math.max(scaleX * 1.150, 0.7) });
  add(svg, 'path', { d: `M0 ${cy}H${581 * scaleX}`, stroke: dark });
}
wave($('clip-wave'), 27.500, 0.988, 0.2, '#f07896', '#f07896');
wave($('pv-wave'), 8.500, 0.18, 0.17, '#3a98dc', '#3a98dc');

const ed = $('ed-wave');
for (let i = 0; i < 64; i++) {
  const beat = i % 4 === 0;
  line(ed, (i * BAR) / 16, 0, '100%', beat ? 'rgba(40,30,34,.55)' : 'rgba(40,30,34,.13)');
}
wave(ed, 58.500, 1, 1, '#282627', '#383436');
wave(ed, 172.500, 1, 1, '#282627', '#383436');
const MARKS = [[72, 'm'], [100, 'b'], [125, 'b'], [145, 'r'], [163, 'v'], [172, 'm'], [199, 'm'], [218, 'p'], [252, 'b'],
  [272, 'm'], [290, 'v'], [345, 'r'], [363, 'v'], [409, 'b'], [436, 'r'], [454, 'v'], [463, 'm'], [490, 'm'], [508, 'p'],
  [535, 'b'], [545, 'p'], [554, 'v'], [563, 'v'], [574, 'b']];
const INK = { m: '#a0289c', b: '#4c5cb4', r: '#b42060', v: '#4a34a0', p: '#7c2ca4' };
for (const [x, c] of MARKS) add(ed, 'path', { d: `M${x - 4} 0h8v1l-4 4-4-4z`, fill: INK[c] });
add(ed, 'path', { d: 'M0 220l8 6v6H0z', fill: '#2a7cb8' });
add(ed, 'path', { d: 'M580 220l-8 6v6h8z', fill: '#2a7cb8' });
```
